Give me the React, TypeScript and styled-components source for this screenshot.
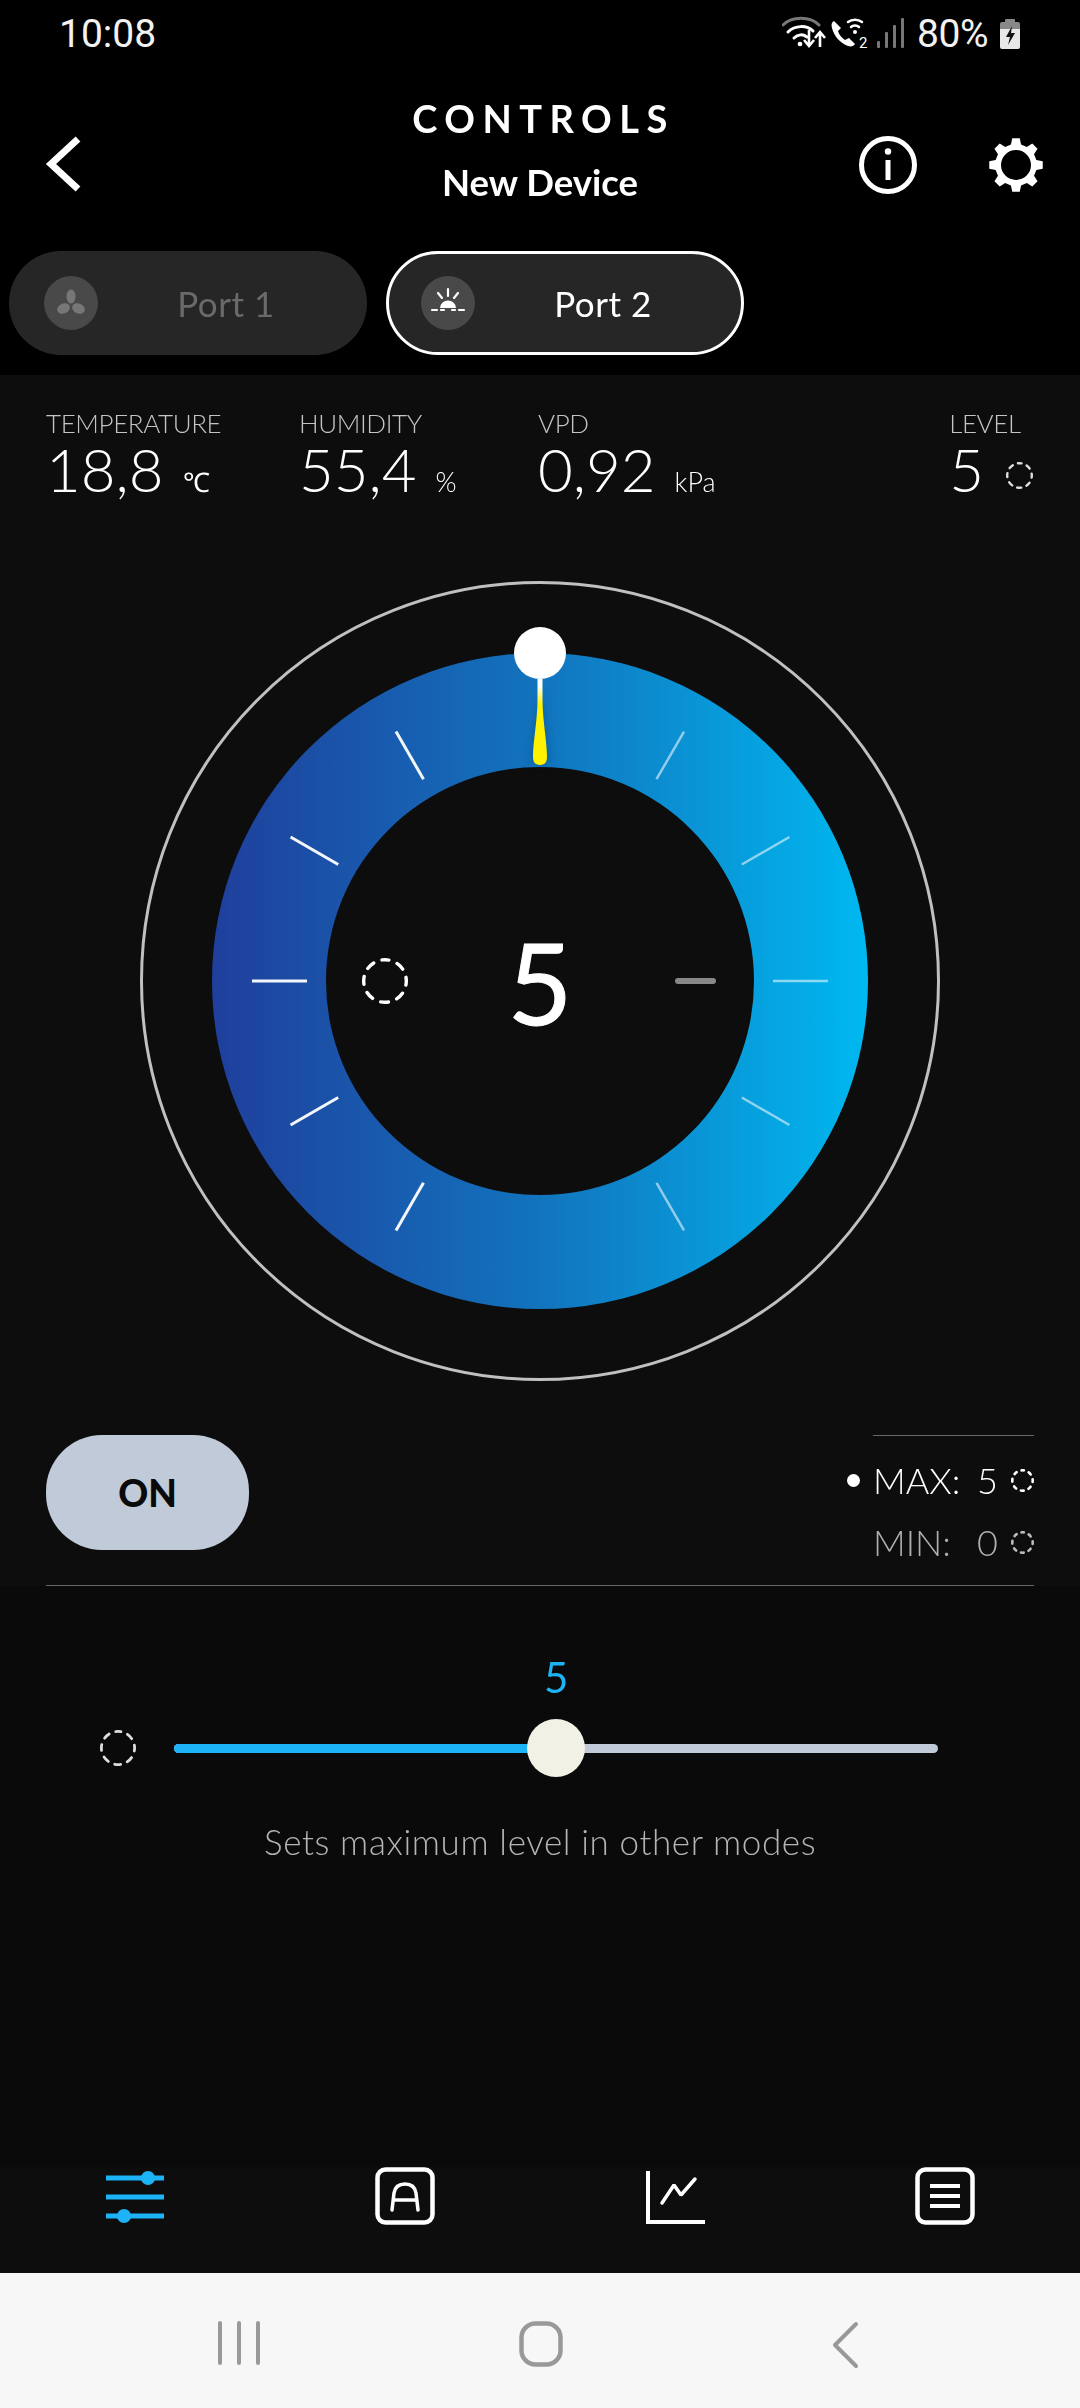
import styled, { createGlobalStyle, css } from "styled-components";

const GlobalStyle = createGlobalStyle`
  * { box-sizing: border-box; }
  html, body { margin: 0; padding: 0; background: #000; }
  body { font-family: "Lato", "Open Sans", sans-serif; color: #fff; }
`;

// own transparent layer, so the text gets grey antialiasing like the phone screen
const greyText = css`
  will-change: transform;
`;

const DIAL_CX = 400;
const DIAL_CY = 400;
const tickAngles = [-150, -120, -90, -60, -30, 30, 60, 90, 120, 150];

const polar = (r: number, deg: number) => {
  const rad = ((deg - 90) * Math.PI) / 180;
  return { x: DIAL_CX + r * Math.cos(rad), y: DIAL_CY + r * Math.sin(rad) };
};

const gearPath = () => {
  const teeth = 8;
  const pts: string[] = [];
  for (let i = 0; i < teeth; i++) {
    const a = (i * 360) / teeth;
    const corners: [number, number][] = [
      [21, a - 14],
      [27, a - 8],
      [27, a + 8],
      [21, a + 14],
    ];
    corners.forEach(([r, d]) => {
      const rad = ((d - 90) * Math.PI) / 180;
      pts.push(`${(30 + r * Math.cos(rad)).toFixed(2)} ${(30 + r * Math.sin(rad)).toFixed(2)}`);
    });
  }
  return `M${pts.join("L")}Z`;
};

function DashedCircle({ size, color = "#fff", width = 2.5 }: { size: number; color?: string; width?: number }) {
  const r = size / 2 - width / 2;
  const seg = (2 * Math.PI * r) / 8;
  // round caps add one stroke width to each dash
  const dash = Math.max(seg * 0.68 - width, 0.8);
  return (
    <svg width={size} height={size} viewBox={`0 0 ${size} ${size}`}>
      <circle
        cx={size / 2}
        cy={size / 2}
        r={r}
        fill="none"
        stroke={color}
        strokeWidth={width}
        strokeLinecap="round"
        strokeDasharray={`${dash} ${seg - dash}`}
        strokeDashoffset={dash / 2}
        transform={`rotate(-90 ${size / 2} ${size / 2})`}
      />
    </svg>
  );
}

function WifiGlyph({ x, y }: { x: number; y: number }) {
  return (
    <g transform={`translate(${x} ${y})`} fill="none" stroke="#fff" strokeWidth="3" strokeLinecap="round">
      <path d="M1 9C10 0 28 0 37 9" stroke="#777" />
      <path d="M6 16C13 9 25 9 31 15" />
      <path d="M12 22C16 18 21 18 25 21" />
      <circle cx="18" cy="28" r="1.6" fill="#fff" strokeWidth="1.5" />
    </g>
  );
}

function StatusIcons() {
  return (
    <svg width="124" height="36" viewBox="0 0 124 36">
      <WifiGlyph x={0} y={0} />
      <path d="M27 14v15M22 24l5 6 5-6M38 31V17M33 22l5-6 5 6" fill="none" stroke="#fff" strokeWidth="2.6" />
      <path
        d="M52 5c-2 1-3 3-2 7 2 8 8 15 16 18 3 1 6 0 7-2l-6-6-4 2c-3-2-6-5-7-9l3-3z"
        fill="#fff"
      />
      <path d="M66 6c4-3 10-3 14 0M69 11c2-2 6-2 8 0" fill="none" stroke="#fff" strokeWidth="2.5" strokeLinecap="round" />
      <circle cx="73" cy="16" r="2" fill="#fff" />
      <text x="77" y="32" fontFamily="Roboto, sans-serif" fontSize="15" fill="#fff">2</text>
      <g fill="#777">
        <rect x="95" y="25" width="3" height="7" rx="1" />
        <rect x="103" y="16" width="3" height="16" rx="1" />
        <rect x="111" y="9" width="3" height="23" rx="1" />
        <rect x="119" y="2" width="3" height="30" rx="1" />
      </g>
    </svg>
  );
}

function BatteryIcon() {
  return (
    <svg width="22" height="31" viewBox="0 0 22 31">
      <rect x="6" y="0" width="10" height="4" rx="1" fill="#888" />
      <path d="M3 3h16a2 2 0 0 1 2 2v6H1V5a2 2 0 0 1 2-2z" fill="#888" />
      <path d="M1 10h20v18a2 2 0 0 1-2 2H3a2 2 0 0 1-2-2z" fill="#e8e8e8" />
      <path d="M13 7l-6 11h4l-2 8 7-12h-4z" fill="#111" />
    </svg>
  );
}

function FanIcon() {
  return (
    <svg width="30" height="30" viewBox="0 0 30 30" fill="#777">
      <ellipse cx="15" cy="8.5" rx="4.5" ry="7" />
      <ellipse cx="7.5" cy="20.5" rx="6.5" ry="5" transform="rotate(-25 7.5 20.5)" />
      <ellipse cx="22.5" cy="20.5" rx="6.5" ry="5" transform="rotate(25 22.5 20.5)" />
    </svg>
  );
}

function SunIcon() {
  return (
    <svg width="36" height="36" viewBox="0 0 36 36" fill="none" stroke="#fff" strokeWidth="2.2" strokeLinecap="round">
      <path d="M10 23a8 7.5 0 0 1 16 0z" fill="#fff" stroke="none" />
      <path d="M18 4v7M8 8l4 5M28 8l-4 5" />
      <path d="M2 25h5M11 25h3M22 25h3M29 25h5" />
    </svg>
  );
}

function SlidersIcon() {
  return (
    <svg width="60" height="60" viewBox="0 0 60 60" stroke="#1db4f7" strokeWidth="5" fill="#1db4f7">
      <path d="M1 11h58M1 30h58M1 49h58" />
      <circle cx="43" cy="11" r="7" stroke="none" />
      <circle cx="19" cy="49" r="7" stroke="none" />
    </svg>
  );
}

function AutoIcon() {
  return (
    <svg width="60" height="60" viewBox="0 0 60 60" fill="none" stroke="#fff">
      <rect x="2.5" y="2.5" width="55" height="53" rx="8" strokeWidth="4.5" />
      <path d="M17 43l2-17c1-6 5-9 11-9s10 3 11 9l2 17M18.5 33h23" strokeWidth="3.5" strokeLinecap="round" />
    </svg>
  );
}

function ChartIcon() {
  return (
    <svg width="60" height="60" viewBox="0 0 60 60" fill="none" stroke="#fff">
      <path d="M3 4v51h57" strokeWidth="4" />
      <path d="M17 36l12-18 7 10 14-16" strokeWidth="3.5" strokeLinecap="round" strokeLinejoin="bevel" />
    </svg>
  );
}

function ListIcon() {
  return (
    <svg width="60" height="60" viewBox="0 0 60 60" fill="none" stroke="#fff">
      <rect x="2.5" y="2.5" width="55" height="53" rx="8" strokeWidth="4.5" />
      <path d="M15 19h30M15 29h30M15 39h30" strokeWidth="4" />
    </svg>
  );
}

function Dial() {
  return (
    <DialWrap>
      <svg width="800" height="800" viewBox="0 0 800 800">
        <defs>
          <linearGradient id="ringFill" x1="0" x2="1" y1="0" y2="0">
            <stop offset="0" stopColor="#1f3f9c" />
            <stop offset="0.5" stopColor="#1274be" />
            <stop offset="1" stopColor="#00b8f0" />
          </linearGradient>
          <linearGradient id="needleFill" x1="0" x2="0" y1="0" y2="1">
            <stop offset="0.08" stopColor="#fff" />
            <stop offset="0.3" stopColor="#fff200" />
            <stop offset="1" stopColor="#fff200" />
          </linearGradient>
          <filter id="needleGlow" x="-200%" y="-20%" width="500%" height="140%">
            <feGaussianBlur stdDeviation="5" />
          </filter>
        </defs>
        <circle cx={DIAL_CX} cy={DIAL_CY} r="398.5" fill="none" stroke="#c0c0c0" strokeWidth="3" />
        <path
          fillRule="evenodd"
          fill="url(#ringFill)"
          d={`M${DIAL_CX - 328} ${DIAL_CY}a328 328 0 1 0 656 0a328 328 0 1 0 -656 0Z
              M${DIAL_CX - 214} ${DIAL_CY}a214 214 0 1 0 428 0a214 214 0 1 0 -428 0Z`}
        />
        {tickAngles.map((a) => {
          const from = polar(233, a);
          const to = polar(288, a);
          const right = a > 0;
          return (
            <line
              key={a}
              x1={from.x}
              y1={from.y}
              x2={to.x}
              y2={to.y}
              stroke="#fff"
              strokeWidth={right ? 2.5 : 3}
              strokeOpacity={right ? 0.55 : 0.95}
            />
          );
        })}
        <path d="M400 112l-8 70h16z" fill="#0a3a66" opacity="0.55" filter="url(#needleGlow)" />
        <path
          d="M397.5 98 L397.5 118 C397.5 140 393 160 393 176 C393 182 396 184 400 184 C404 184 407 182 407 176 C407 160 402.5 140 402.5 118 L402.5 98Z"
          fill="url(#needleFill)"
        />
        <circle cx="400" cy="72" r="26" fill="#fff" />
      </svg>
      <DialValue>5</DialValue>
      <DialLeftIcon>
        <DashedCircle size={46} width={3.4} />
      </DialLeftIcon>
      <DialRightMark />
    </DialWrap>
  );
}

export default function App() {
  return (
    <Screen>
      <GlobalStyle />
      <StatusBar>
        <StatusTime>10:08</StatusTime>
        <StatusRight>
          <StatusIcons />
          <StatusPercent>80%</StatusPercent>
          <BatteryIcon />
        </StatusRight>
      </StatusBar>

      <Header>
        <HeaderSide>
          <svg width="44" height="64" viewBox="0 0 44 64" fill="none" stroke="#fff" strokeWidth="7">
            <path d="M36 6L9 31l27 25" />
          </svg>
        </HeaderSide>
        <HeaderTitles>
          <HeaderTitle>CONTROLS</HeaderTitle>
          <HeaderSubtitle>New Device</HeaderSubtitle>
        </HeaderTitles>
        <HeaderActions>
          <svg width="60" height="60" viewBox="0 0 60 60" fill="none" stroke="#fff">
            <circle cx="30" cy="30" r="26.5" strokeWidth="5" />
            <path d="M30 25v20" strokeWidth="5" />
            <circle cx="30" cy="16.5" r="3.2" fill="#fff" stroke="none" />
          </svg>
          <svg width="60" height="60" viewBox="0 0 60 60">
            <path fillRule="evenodd" fill="#fff" d={`${gearPath()}M30 15a15 15 0 1 0 0 30a15 15 0 1 0 0-30Z`} />
          </svg>
        </HeaderActions>
      </Header>

      <Tabs>
        <PortTab>
          <PortIcon>
            <FanIcon />
          </PortIcon>
          <PortLabel>Port 1</PortLabel>
        </PortTab>
        <PortTab $active>
          <PortIcon>
            <SunIcon />
          </PortIcon>
          <PortLabel $active>Port 2</PortLabel>
        </PortTab>
      </Tabs>

      <Main>
        <Stats>
          <Stat>
            <StatLabel>TEMPERATURE</StatLabel>
            <StatValue>
              18,8<StatUnit>℃</StatUnit>
            </StatValue>
          </Stat>
          <Stat>
            <StatLabel>HUMIDITY</StatLabel>
            <StatValue>
              55,4<StatUnit>%</StatUnit>
            </StatValue>
          </Stat>
          <Stat>
            <StatLabel>VPD</StatLabel>
            <StatValue>
              0,92<StatUnit>kPa</StatUnit>
            </StatValue>
          </Stat>
          <Stat>
            <StatLabel>LEVEL</StatLabel>
            <StatValue>
              5
              <LevelIcon>
                <DashedCircle size={27} width={2.4} color="#ddd" />
              </LevelIcon>
            </StatValue>
          </Stat>
        </Stats>

        <Dial />

        <ControlRow>
          <OnButton>ON</OnButton>
          <Limits>
            <LimitRow>
              <LimitDot />
              <LimitName>MAX:</LimitName>
              <LimitValue>5</LimitValue>
              <DashedCircle size={23} width={2.6} />
            </LimitRow>
            <LimitRow $muted>
              <LimitName>MIN:</LimitName>
              <LimitValue>0</LimitValue>
              <DashedCircle size={23} width={2.6} color="#bbb" />
            </LimitRow>
          </Limits>
        </ControlRow>

        <SliderSection>
          <SliderValue>5</SliderValue>
          <SliderRow>
            <DashedCircle size={36} width={2.8} color="#ddd" />
            <SliderTrack>
              <SliderFill style={{ width: `${(5 / 10) * 100 - 1}%` }} />
              <SliderThumb />
            </SliderTrack>
          </SliderRow>
          <SliderCaption>Sets maximum level in other modes</SliderCaption>
        </SliderSection>

        <BottomNav>
          <NavItem><SlidersIcon /></NavItem>
          <NavItem><AutoIcon /></NavItem>
          <NavItem><ChartIcon /></NavItem>
          <NavItem><ListIcon /></NavItem>
        </BottomNav>
      </Main>

      <SystemBar>
        <svg width="44" height="44" viewBox="0 0 44 44" stroke="#999" strokeWidth="4" strokeLinecap="round">
          <path d="M3 2v40M22 2v40M41 2v40" />
        </svg>
        <svg width="44" height="46" viewBox="0 0 44 46" fill="none" stroke="#999" strokeWidth="4.5">
          <rect x="2.5" y="2.5" width="39" height="41" rx="14" />
        </svg>
        <svg width="28" height="48" viewBox="0 0 28 48" fill="none" stroke="#999" strokeWidth="4" strokeLinecap="round" strokeLinejoin="round">
          <path d="M25 3L4 24l21 21" />
        </svg>
      </SystemBar>
    </Screen>
  );
}

const Screen = styled.div`
  width: 1080px;
  height: 2408px;
  display: flex;
  flex-direction: column;
  background: #000;
  overflow: hidden;
`;

const StatusBar = styled.div`
  height: 68px;
  display: flex;
  align-items: center;
  justify-content: space-between;
  padding: 0 59px 0 59px;
  font-family: "Roboto", sans-serif;
`;

const StatusTime = styled.span`
  font-size: 39px;
  color: #f2f2f2;
`;

const StatusRight = styled.div`
  display: flex;
  align-items: center;
  gap: 11px;
`;

const StatusPercent = styled.span`
  font-size: 39px;
  letter-spacing: -0.5px;
  color: #f2f2f2;
`;

const Header = styled.div`
  height: 183px;
  display: grid;
  grid-template-columns: 230px 1fr 230px;
  padding-top: 29px;
  align-items: start;
`;

const HeaderSide = styled.div`
  padding: 36px 0 0 42px;
`;

const HeaderTitles = styled.div`
  ${greyText}
  display: flex;
  flex-direction: column;
  align-items: center;
  gap: 22px;
`;

const HeaderTitle = styled.div`
  font-size: 38px;
  line-height: 42px;
  font-weight: 700;
  letter-spacing: 7.5px;
  margin-right: -7px;
`;

const HeaderSubtitle = styled.div`
  font-size: 36.5px;
  line-height: 42px;
  font-weight: 700;
`;

const HeaderActions = styled.div`
  display: flex;
  justify-content: flex-end;
  gap: 68px;
  padding: 38px 34px 0 0;
`;

const Tabs = styled.div`
  height: 124px;
  display: flex;
  gap: 19px;
  padding-left: 9px;
`;

const PortTab = styled.div<{ $active?: boolean }>`
  width: 358px;
  height: 104px;
  border-radius: 52px;
  background: #262626;
  border: 3px solid ${(p) => (p.$active ? "#fff" : "transparent")};
  display: flex;
  align-items: center;
  padding-left: 32px;
`;

const PortIcon = styled.div`
  width: 54px;
  height: 54px;
  border-radius: 50%;
  background: #494949;
  display: flex;
  align-items: center;
  justify-content: center;
`;

const PortLabel = styled.span<{ $active?: boolean }>`
  ${greyText}
  flex: 1;
  text-align: center;
  font-size: 35px;
  color: ${(p) => (p.$active ? "#fff" : "#6a6a6a")};
  letter-spacing: 0.5px;
  padding-right: 10px;
`;

const Main = styled.div`
  flex: 1;
  display: flex;
  flex-direction: column;
  background: #0d0d0d;
`;

const Stats = styled.div`
  ${greyText}
  display: grid;
  grid-template-columns: 253px 239px 1fr auto;
  padding: 33px 47px 0 46px;
`;

const Stat = styled.div`
  display: flex;
  flex-direction: column;
`;

const StatLabel = styled.div`
  font-size: 26px;
  line-height: 30px;
  font-weight: 300;
  letter-spacing: -0.4px;
  color: #c4c4c4;
`;

const StatValue = styled.div`
  font-size: 60px;
  line-height: 62px;
  font-weight: 300;
  display: flex;
  align-items: baseline;
`;

const StatUnit = styled.span`
  font-size: 27px;
  margin-left: 19px;
`;

const LevelIcon = styled.span`
  margin: 12px 0 0 22px;
  align-self: center;
  display: flex;
`;

const DialWrap = styled.div`
  position: relative;
  width: 800px;
  height: 800px;
  margin: 68px auto 0;

  svg {
    display: block;
  }
`;

const DialValue = styled.div`
  ${greyText}
  position: absolute;
  left: 0;
  right: 0;
  top: 321px;
  text-align: center;
  font-size: 112px;
  line-height: 160px;
  -webkit-text-stroke: 1px #fff;
`;

const DialLeftIcon = styled.div`
  position: absolute;
  left: 222px;
  top: 377px;
`;

const DialRightMark = styled.div`
  position: absolute;
  left: 535px;
  top: 397px;
  width: 41px;
  height: 6px;
  border-radius: 3px;
  background: #888;
`;

const ControlRow = styled.div`
  height: 151px;
  margin: 54px 46px 0;
  border-bottom: 1px solid #666;
  display: flex;
  justify-content: space-between;
`;

const OnButton = styled.div`
  width: 203px;
  height: 115px;
  border-radius: 56px;
  background: #c0cad8;
  color: #0a0a0a;
  font-size: 37px;
  font-weight: 900;
  display: flex;
  align-items: center;
  justify-content: center;
`;

const Limits = styled.div`
  ${greyText}
  width: 161px;
  border-top: 1px solid #666;
  padding-top: 24px;
  display: flex;
  flex-direction: column;
  gap: 22px;
`;

const LimitRow = styled.div<{ $muted?: boolean }>`
  position: relative;
  height: 40px;
  display: flex;
  align-items: center;
  color: ${(p) => (p.$muted ? "#b0b0b0" : "#fff")};
  font-size: 36px;
  font-weight: 300;
`;

const LimitDot = styled.span`
  position: absolute;
  left: -26px;
  top: 14px;
  width: 13px;
  height: 13px;
  border-radius: 50%;
  background: #fff;
`;

const LimitName = styled.span`
  flex: 1;
`;

const LimitValue = styled.span`
  margin-right: 13px;
`;

const SliderSection = styled.div`
  flex: 1;
  display: flex;
  flex-direction: column;
  align-items: center;
  padding-top: 68px;
  background: #0a0a0a;
`;

const SliderValue = styled.div`
  ${greyText}
  font-size: 42px;
  line-height: 46px;
  color: #1db4f7;
  margin-left: 32px;
`;

const SliderRow = styled.div`
  width: 1080px;
  height: 58px;
  margin-top: 19px;
  padding: 0 142px 0 100px;
  display: flex;
  align-items: center;
  gap: 38px;
`;

const SliderTrack = styled.div`
  position: relative;
  flex: 1;
  height: 9px;
  border-radius: 5px;
  background: #c0cad8;
`;

const SliderFill = styled.div`
  height: 100%;
  border-radius: 5px;
  background: #1db4f7;
`;

const SliderThumb = styled.div`
  position: absolute;
  left: 353px;
  top: -25px;
  width: 58px;
  height: 58px;
  border-radius: 50%;
  background: #f1f1e6;
`;

const SliderCaption = styled.div`
  ${greyText}
  margin-top: 43px;
  font-size: 35px;
  line-height: 42px;
  font-weight: 300;
  color: #b4b4b4;
  letter-spacing: 0.6px;
`;

const BottomNav = styled.div`
  height: 106px;
  display: grid;
  grid-template-columns: repeat(4, 1fr);
  align-items: start;
`;

const NavItem = styled.div`
  display: flex;
  justify-content: center;
`;

const SystemBar = styled.div`
  height: 135px;
  background: #f7f7f7;
  display: grid;
  grid-template-columns: 302px 312px 100px;
  padding-left: 217px;
  padding-top: 48px;
  align-items: start;
`;
